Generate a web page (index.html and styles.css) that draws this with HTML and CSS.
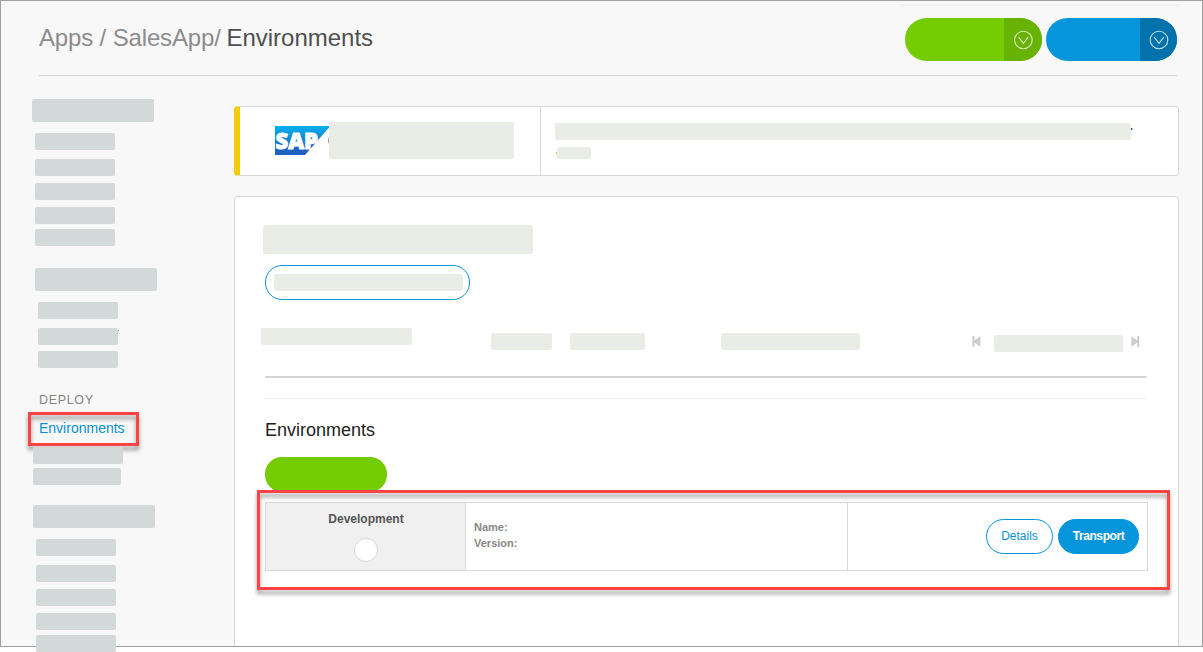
FILE: index.html
```html
<!DOCTYPE html>
<html lang="en">
<head>
<meta charset="utf-8">
<title>SalesApp - Environments</title>
<link rel="stylesheet" href="styles.css">
</head>
<body>
<div class="app">
  <header class="header">
    <h1 class="crumbs"><span>Apps / SalesApp/</span> <b>Environments</b></h1>
    <div class="actions">
      <div class="split green"><div class="toggle"><svg width="20" height="20" viewBox="0 0 20 20"><circle cx="10.4" cy="10" r="8.8"/><path d="M5.6 7.2 10.4 13.4l4.8-6.2"/></svg></div></div>
      <div class="split blue"><div class="toggle"><svg width="20" height="20" viewBox="0 0 20 20"><circle cx="10" cy="10" r="8.8"/><path d="M5.2 7.2 10 13.4l4.8-6.2"/></svg></div></div>
    </div>
  </header>
  <div class="body">
    <nav class="sidebar">
      <div class="group first">
        <div class="bar title"></div>
        <div class="bar"></div><div class="bar gap9"></div><div class="bar gap7"></div><div class="bar gap7"></div><div class="bar gap5"></div>
      </div>
      <div class="group second">
        <div class="bar title"></div>
        <div class="bar"></div><div class="bar gap9 speck"></div><div class="bar gap6"></div>
      </div>
      <div class="deploy">
        <div class="label">DEPLOY</div>
        <a class="current highlight">Environments</a>
        <div class="bar w90"></div><div class="bar w88"></div>
      </div>
      <div class="group third">
        <div class="bar title"></div>
        <div class="bar"></div><div class="bar gap9"></div><div class="bar gap7"></div><div class="bar gap7"></div><div class="bar gap5"></div>
      </div>
    </nav>
    <main class="main">
      <section class="notice">
        <div class="brand">
          <svg width="54" height="29" viewBox="0 0 54 29">
            <defs><linearGradient id="sap" x1="0" y1="0" x2="0" y2="1"><stop offset="0" stop-color="#06b2ee"/><stop offset=".8" stop-color="#1e62bf"/><stop offset="1" stop-color="#1e5fbd"/></linearGradient></defs>
            <path d="M0 0h54v1.500L30 29H0z" fill="url(#sap)"/>
            <text x="0.5" y="22.600" textLength="42.500" lengthAdjust="spacingAndGlyphs" class="sap">SAP</text>
            <path d="M54 11Q52 14.500 54 18z" fill="#999"/>
          </svg>
          <div class="fill brand-name"></div>
        </div>
        <div class="message"><div class="fill line-a"></div><div class="fill line-b"></div></div>
      </section>
      <section class="panel">
        <div class="fill heading"></div>
        <div class="outline"><div class="fill"></div></div>
        <div class="toolbar">
          <div class="fill t1"></div><div class="fill t2"></div><div class="fill t3"></div><div class="fill t4"></div>
          <svg class="prev" width="9" height="11" viewBox="0 0 9 11"><path d="M.4 0H2.400v4.500L8.400 0v11L2.400 6.500V11H.4z"/></svg>
          <div class="fill t5"></div>
          <svg class="next" width="9" height="11" viewBox="0 0 9 11"><path d="M8.200 0H6.200v4.500L.4 0v11l5.800-4.500V11H8.200z"/></svg>
        </div>
        <div class="rule"></div>
        <div class="rule-thin"></div>
        <h2 class="subhead">Environments</h2>
        <div class="create"></div>
        <div class="environment highlight">
          <div class="row">
            <div class="stage"><strong>Development</strong><i></i></div>
            <div class="info"><div>Name:</div><div>Version:</div></div>
            <div class="buttons"><button class="details">Details</button><button class="transport"><span>Transport</span></button></div>
          </div>
        </div>
      </section>
    </main>
  </div>
</div>
</body>
</html>
```
FILE: styles.css
```css
* { box-sizing: border-box; }
body { margin: 0; height: 652px; background: #fff; font-family: "Liberation Sans", Arial, sans-serif; overflow: hidden; }
.app { width: 1203px; height: 647px; border: 1px solid #a0a0a0; background: #f8f8f8; }

.header { height: 75px; margin: 0 25px 0 38px; border-bottom: 1px solid #d8d8d8; display: flex; justify-content: space-between; position: relative; }
.header::before { content: ""; position: absolute; top: 4px; right: -4px; width: 282px; height: 1px; background: #eee; }
.crumbs { margin: 23px 0 0; font-size: 24px; line-height: 28px; font-weight: 400; color: #8c8c8c; white-space: nowrap; }
.crumbs span { letter-spacing: -.15px; }
.crumbs b { font-weight: 400; color: #505050; margin-left: -1px; }
.actions { display: flex; gap: 4px; margin-top: 17px; }
.split { height: 43px; border-radius: 22px; overflow: hidden; display: flex; justify-content: flex-end; }
.toggle { display: flex; align-items: center; justify-content: center; }
.toggle svg { fill: none; stroke: rgba(255,255,255,.75); stroke-width: 1.1; }
.green { width: 137px; background: #76cc02; }
.green .toggle { width: 38px; background: #68b204; }
.blue { width: 131px; background: #0595db; }
.blue .toggle { width: 37px; background: #0272aa; }

.body { display: grid; grid-template-columns: 233px 945px; height: 570px; }
.sidebar { padding-top: 23px; }
.bar { position: relative; width: 80px; height: 17px; border-radius: 2px; background: #d3d9d8; margin-left: 3px; }
.bar.title { width: 122px; height: 23px; margin: 0 0 11px; }
.gap9 { margin-top: 9px; }
.gap7 { margin-top: 7px; }
.gap6 { margin-top: 6px; }
.gap5 { margin-top: 5px; }
.speck::after { content: ""; position: absolute; left: 80px; top: 2px; width: 1px; height: 1px; background: #888; }
.first { margin-left: 31px; }
.second { margin: 22px 0 0 34px; }
.third { margin: 20px 0 0 32px; }
.deploy { padding: 24px 0 0 32px; }
.label { height: 16px; margin-left: 6px; font-size: 12.5px; line-height: 16px; letter-spacing: .65px; color: #858585; }
.current { display: block; width: 111px; height: 34px; margin: 4px 0 1px -5px; padding: 8px 0 0 11px; font-size: 14px; line-height: 16px; color: #0891d5; }
.w90, .w88 { width: 90px; margin: 0; }
.w88 { width: 88px; margin-top: 4px; }

/* Red callout frame, casting a shadow on both sides of its stroke */
.highlight { position: relative; }
.highlight::after { content: ""; position: absolute; inset: 0; border: 3px solid #fd4343; filter: drop-shadow(0 4px 2px rgba(0,0,0,.4)); pointer-events: none; }

.main { padding-top: 30px; }
.notice { height: 70px; border: 1px solid #d8d8d8; border-left: 6px solid #f0ce0c; border-radius: 4px; background: #fff; display: grid; grid-template-columns: 301px 1fr; }
.brand { border-right: 1px solid #d8d8d8; padding: 15px 0 0 35px; display: flex; }
.brand svg { margin-top: 4px; overflow: visible; }
.sap { font: 800 22px "Open Sans", sans-serif; fill: #fff; stroke: #fff; stroke-width: 1px; }
.fill { height: 17px; border-radius: 2px; background: #eaede6; }
.brand-name { width: 185px; height: 37px; }
.message { padding: 16px 0 0 14px; }
.line-a, .line-b { position: relative; }
.line-a { width: 576px; }
.line-b { width: 34px; height: 12px; margin: 7px 0 0 2px; }
.line-a::after { content: ""; position: absolute; left: 576px; top: 5px; width: 2px; height: 2px; background: linear-gradient(90deg, #3c4a80 50%, #b8d4e4 50%); }
.line-b::after { content: ""; position: absolute; left: -1px; top: 5px; width: 1px; height: 2px; background: #eab96b; }

.panel { margin-top: 20px; height: 450px; border: 1px solid #d8d8d8; border-bottom: 0; border-radius: 4px 4px 0 0; background: #fff; padding: 28px 31px 0 30px; }
.heading { width: 270px; height: 29px; border-radius: 3px; margin-left: -2px; }
.outline { width: 205px; height: 35px; margin-top: 11px; border: 1px solid #0595db; border-radius: 17px; padding: 8px 0 0 8px; }
.outline .fill { width: 189px; }
.toolbar { display: flex; height: 24px; margin: 28px 0 0 -4px; }
.toolbar > * { flex-shrink: 0; }
.t1 { width: 151px; }
.t2 { width: 61px; margin: 5px 0 0 79px; }
.t3 { width: 75px; margin: 5px 0 0 18px; }
.t4 { width: 139px; margin: 5px 0 0 76px; }
.t5 { width: 129px; margin: 7px 0 0 13px; }
.prev, .next { fill: #cdcdcd; margin-top: 8px; }
.prev { margin-left: 112px; }
.next { margin-left: 8px; }
.rule { height: 2px; margin-top: 24px; background: #d6d6d6; border-radius: 1px; }
.rule-thin { height: 1px; margin-top: 20px; background: #eee; }
.subhead { margin: 21px 0 0; font-size: 18px; line-height: 20px; font-weight: 400; color: #222; }
.create { width: 122px; height: 35px; margin-top: 17px; border-radius: 17px; background: #76cc02; }
.environment { width: 913px; height: 100px; margin: -2px 0 0 -8px; padding: 12px 0 0 8px; background: #fff; }
.row { width: 883px; height: 69px; border: 1px solid #d8d8d8; display: grid; grid-template-columns: 200px 382px 1fr; }
.stage { background: #f0f0f0; border-right: 1px solid #d8d8d8; display: flex; flex-direction: column; align-items: center; padding-top: 8px; }
.stage strong { font-size: 12px; line-height: 16px; color: #555; margin-left: 1px; }
.stage i { width: 24px; height: 24px; margin: 11px 0 0 1px; border: 1px solid #d8d8d8; border-radius: 50%; background: #fff; }
.info { padding: 16px 0 0 8px; border-right: 1px solid #d8d8d8; font-size: 11px; line-height: 16px; font-weight: 700; color: #888; }
.buttons { display: flex; gap: 5px; justify-content: flex-end; padding: 16px 8px 0 0; }
.buttons button { height: 35px; border: 1px solid #0595db; border-radius: 17.5px; padding: 0 0 1px; font: 12px "Liberation Sans", Arial, sans-serif; }
.details { width: 67px; color: #0891d5; background: #fff; }
.buttons .transport { width: 81px; color: #fff; background: #0595db; font-weight: 700; letter-spacing: -.4px; }
```
